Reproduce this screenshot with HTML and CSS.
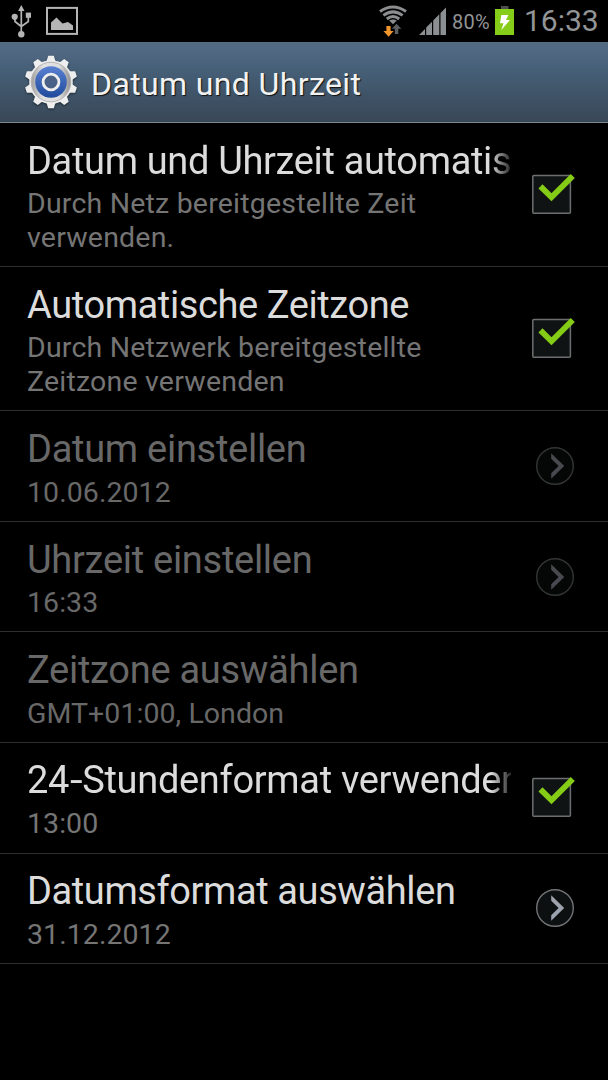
FILE: index.html
```html
<!DOCTYPE html>
<html lang="de">
<head>
<meta charset="utf-8">
<title>Datum und Uhrzeit</title>
<link rel="stylesheet" href="styles.css">
</head>
<body>
<svg class="defs" width="0" height="0">
  <defs>
    <linearGradient id="blue" x1="0" y1="0" x2="0" y2="1"><stop offset="0" stop-color="#5a80d2"/><stop offset="1" stop-color="#1f4b9c"/></linearGradient>
    <linearGradient id="metal" x1="0" y1="0" x2="1" y2="0"><stop offset="0" stop-color="#a0a0a0"/><stop offset=".3" stop-color="#e2e2e2"/><stop offset=".7" stop-color="#dedede"/><stop offset="1" stop-color="#909090"/></linearGradient>
    <linearGradient id="chev" x1="0" y1="0" x2="0" y2="1"><stop offset="0" stop-color="#a0a3a8"/><stop offset="1" stop-color="#9aa2b4"/></linearGradient>
    <symbol id="check" viewBox="0 0 48 48">
      <rect x="2.8" y="4.6" width="37.6" height="37.6" rx="1" fill="#101314" stroke="#6c6e6f" stroke-width="1.5"/>
      <path d="M10.5 15.4 21.5 26.2 42.8 5" fill="none" stroke="#84cc16" stroke-width="5.8"/>
    </symbol>
    <symbol id="arrow" viewBox="0 0 48 48">
      <circle cx="25" cy="24" r="18.3" fill="#0d1011" stroke="#717374" stroke-width="1.4"/>
      <path d="M21.2 11.2 34.2 24 21.2 36.8V31.2L28.6 24 21.2 16.8Z" fill="url(#chev)"/>
    </symbol>
  </defs>
</svg>
<div class="status">
  <svg class="usb" width="24" height="42" viewBox="0 0 24 42" fill="none" stroke="#b5b5b5" stroke-width="1.7">
    <path d="M11.3 9V33M5 17V21.5L11.3 26.5M18.3 16V21.5L11.3 26.5"/>
    <path d="M11.3 5 14.5 11H8.1Z" fill="#b5b5b5" stroke="none"/>
    <circle cx="4.7" cy="16.8" r="3.1" fill="#b5b5b5" stroke="none"/>
    <rect x="15.8" y="12.6" width="5.2" height="5.2" fill="#b5b5b5" stroke="none"/>
    <circle cx="11.3" cy="34.2" r="3.2" fill="#b5b5b5" stroke="none"/>
  </svg>
  <svg class="photo" width="32" height="42" viewBox="0 0 32 42">
    <rect x="1" y="7.9" width="30" height="26" fill="none" stroke="#b5b5b5" stroke-width="2"/>
    <path d="M5 30V22.5L10.5 17.5 16.5 23.5 22 22 27 25.5V30Z" fill="#b5b5b5"/>
  </svg>
  <svg class="wifi" width="28" height="42" viewBox="0 0 28 42" fill="none">
    <g stroke="#8b8d8e" stroke-width="3">
      <path d="M1 11.5Q14 2.6 27 11.5"/><path d="M4.4 15.4Q14 8.4 23.6 15.4"/><path d="M7.8 19Q14 14 20.2 19"/>
    </g>
    <path d="M10.2 20.6Q14 18.2 17.8 20.6L14 24.2Z" fill="#8b8d8e"/>
    <path d="M7.4 26V31H4.4L9.6 36.8 14.6 31H11.6V26Z" fill="#f0962d"/>
    <path d="M15.8 34V28.8H12.9L17.5 23.8 22.3 28.8H19.3V34Z" fill="#5c5e5f"/>
  </svg>
  <svg class="signal" width="28" height="42" viewBox="0 0 28 42" fill="#8b8f91">
    <path d="M0 35 6 29V35ZM7.2 35V27.6L13 21.8V35ZM14.2 35V20.4L20.3 14.3V35ZM21.5 35V13.1L27 7.6V35Z"/>
  </svg>
  <span class="percent">80%</span>
  <svg class="battery" width="20" height="42" viewBox="0 0 20 42">
    <rect x="6" y="6" width="7.5" height="3.5" fill="#4b4d4e"/>
    <rect x="0" y="9" width="19" height="26" fill="#86cd1a"/>
    <path d="M6.3 15H13.4L11 20H15L6.3 30 8.5 23.3H5Z" fill="#fff"/>
  </svg>
  <span class="clock">16:33</span>
</div>
<header class="bar">
  <svg class="gear" width="52" height="54" viewBox="-26 -27 52 54">
    <g fill="#eee">
      <circle r="21.8"/>
      <path id="tooth" d="M-4.6-20.5-2.8-26.3H2.8L4.6-20.5V20.5L2.8 26.3H-2.8L-4.6 20.5Z"/>
      <use href="#tooth" transform="rotate(36)"/><use href="#tooth" transform="rotate(72)"/><use href="#tooth" transform="rotate(108)"/><use href="#tooth" transform="rotate(144)"/>
    </g>
    <circle r="19.8" fill="url(#metal)" stroke="#b0b0b0" stroke-width=".9"/>
    <circle r="15.8" fill="url(#blue)"/>
    <circle r="7.9" fill="#496087" stroke="#eee" stroke-width="2.8"/>
  </svg>
  <h1>Datum und Uhrzeit</h1>
</header>
<main>
  <section class="row tall"><div class="text"><h2 class="fade">Datum und Uhrzeit automatisch</h2><p>Durch Netz bereitgestellte Zeit<br>verwenden.</p></div><svg class="widget"><use href="#check"/></svg></section>
  <section class="row tall"><div class="text"><h2>Automatische Zeitzone</h2><p>Durch Netzwerk bereitgestellte<br>Zeitzone verwenden</p></div><svg class="widget"><use href="#check"/></svg></section>
  <section class="row off"><div class="text"><h2>Datum einstellen</h2><p class="digits">10.06.2012</p></div><svg class="widget"><use href="#arrow"/></svg></section>
  <section class="row off"><div class="text"><h2>Uhrzeit einstellen</h2><p class="digits">16:33</p></div><svg class="widget"><use href="#arrow"/></svg></section>
  <section class="row off"><div class="text"><h2>Zeitzone auswählen</h2><p class="digits">GMT+01:00, London</p></div></section>
  <section class="row low"><div class="text"><h2 class="fade">24<span class="hyphen">-</span>Stundenformat verwenden</h2><p class="digits">13:00</p></div><svg class="widget"><use href="#check"/></svg></section>
  <section class="row low"><div class="text"><h2>Datumsformat auswählen</h2><p class="digits">31.12.2012</p></div><svg class="widget"><use href="#arrow"/></svg></section>
</main>
</body>
</html>
```
FILE: styles.css
```css
* { box-sizing: border-box; }
html, body { margin: 0; height: 100%; background: #000; overflow: hidden; }
body { font-family: Roboto, "Noto Sans", sans-serif; }
h1, h2, p { margin: 0; font-weight: 400; white-space: nowrap; }
svg { display: block; flex: none; }
.defs { position: absolute; }
.status { display: flex; height: 42px; padding-left: 10px; color: #929496; }
.photo { margin-left: 12px; }
.wifi { margin-left: 301px; }
.signal { margin-left: 12px; }
.percent { width: 39px; margin-left: 5px; font-size: 20px; line-height: 44px; letter-spacing: .2px; }
.battery { margin-left: 4px; }
.clock { margin-left: 9px; font-size: 30px; line-height: 42px; }
.bar {
  display: flex; align-items: center; height: 81px; padding-left: 25px;
  background: linear-gradient(#526b83, #4e6580 18%, #466078 32%, #384757);
  border-top: 1px solid #52707f; border-bottom: 1px solid #7d868e;
}
.gear { margin-top: -1px; filter: drop-shadow(0 1px 1px rgba(0,0,0,.5)); }
h1 { margin: 2px 0 0 14px; font-size: 32px; letter-spacing: .38px; color: #f2f2f2; text-shadow: 1px 1px 1px #111; }
.row { display: flex; align-items: center; height: 110.6px; padding-left: 27px; border-bottom: 1px solid #2e2e2e; }
.tall { height: 144.1px; }
.text { align-self: flex-start; width: 484px; padding-top: 16px; }
.low .text { padding-top: 15px; }
h2 { overflow: hidden; font-size: 38px; line-height: 44px; letter-spacing: -.4px; color: #dcdcdc; }
.tall .fade { letter-spacing: -.34px; }
.low .fade { letter-spacing: -.32px; }
.fade {
  -webkit-mask-image: linear-gradient(90deg, #000 464px, transparent 488px);
  mask-image: linear-gradient(90deg, #000 464px, transparent 488px);
}
.hyphen { display: inline-block; transform: scaleX(1.2); margin: 0 1.5px; }
p { margin-top: 4px; font-size: 28.5px; line-height: 34px; letter-spacing: .2px; color: #757575; }
.low p { margin-top: 5px; }
.digits { letter-spacing: .06px; }
.widget { width: 48px; height: 48px; margin-left: 19px; }
.off h2 { letter-spacing: -.28px; color: #686868; }
.off p { margin-top: 4.6px; color: #686868; }
.off .widget { opacity: .45; }
```
